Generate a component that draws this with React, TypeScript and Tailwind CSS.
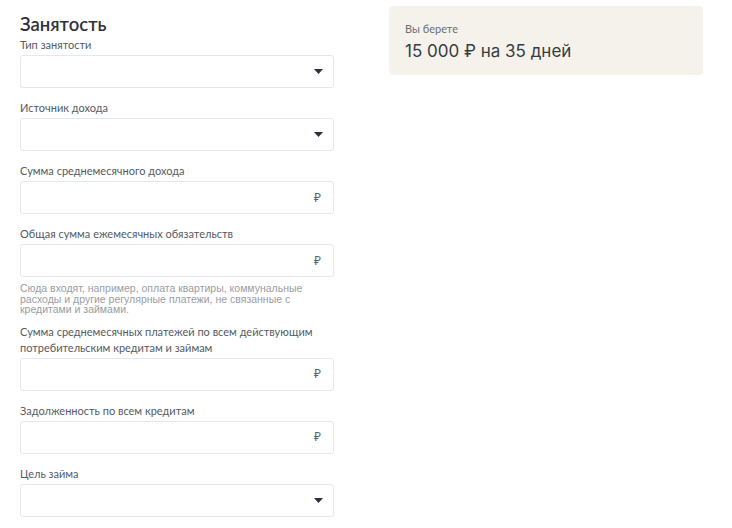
import { ReactNode } from 'react';

function Caret() {
  return (
    <svg width="9" height="5" viewBox="0 0 9 5" className="text-[#2b3040]">
      <path d="M0 0h9L4.5 5z" fill="currentColor" />
    </svg>
  );
}

function Field({
  label,
  kind,
  hint,
}: {
  label: ReactNode;
  kind: 'select' | 'money';
  hint?: string;
}) {
  return (
    <div className="flex flex-col">
      <label className="mb-[2px] text-[11px] leading-[16px] text-[#555a63]">{label}</label>
      <div className="flex h-[33px] items-center justify-end rounded-[3px] border border-[#e4e7ee] bg-white pr-[10px]">
        {kind === 'select' ? (
          <Caret />
        ) : (
          <span className="pr-[2px] text-[12px] text-[#5b5f68]">₽</span>
        )}
      </div>
      {hint && (
        <p
          className="-mb-[3px] mt-[6px] text-[10.5px] leading-[10.5px] text-[#9a9da3]"
          style={{ fontFamily: '"Liberation Sans", Arial, sans-serif' }}
        >
          {hint}
        </p>
      )}
    </div>
  );
}

export default function App() {
  return (
    <div
      className="flex min-h-[528px] gap-[55px] bg-white px-[20px] pt-[6px]"
      style={{ fontFamily: 'Lato, "Noto Sans", sans-serif' }}
    >
      <div className="flex w-[314px] flex-col gap-[12px]">
        <h2 className="-mb-[12px] mt-[5px] text-[18.5px] font-semibold leading-[26px] text-[#2f323a]">
          Занятость
        </h2>
        <Field label="Тип занятости" kind="select" />
        <Field label="Источник дохода" kind="select" />
        <Field label="Сумма среднемесячного дохода" kind="money" />
        <Field
          label="Общая сумма ежемесячных обязательств"
          kind="money"
          hint="Сюда входят, например, оплата квартиры, коммунальные расходы и другие регулярные платежи, не связанные с кредитами и займами."
        />
        <Field
          label={
            <>
              Сумма среднемесячных платежей по всем действующим
              <br />
              потребительским кредитам и займам
            </>
          }
          kind="money"
        />
        <Field label="Задолженность по всем кредитам" kind="money" />
        <Field label="Цель займа" kind="select" />
      </div>
      <div className="h-[69px] w-[314px] rounded-[4px] bg-[#f5f2ec] px-[16px] pt-[15px]">
        <div className="text-[11px] leading-[16px] text-[#6b6e75]">Вы берете</div>
        <div
          className="mt-[2px] text-[17px] leading-[24px] text-[#383b43]"
          style={{ fontFamily: 'Inter, sans-serif' }}
        >
          15 000 ₽ на 35 дней
        </div>
      </div>
    </div>
  );
}
